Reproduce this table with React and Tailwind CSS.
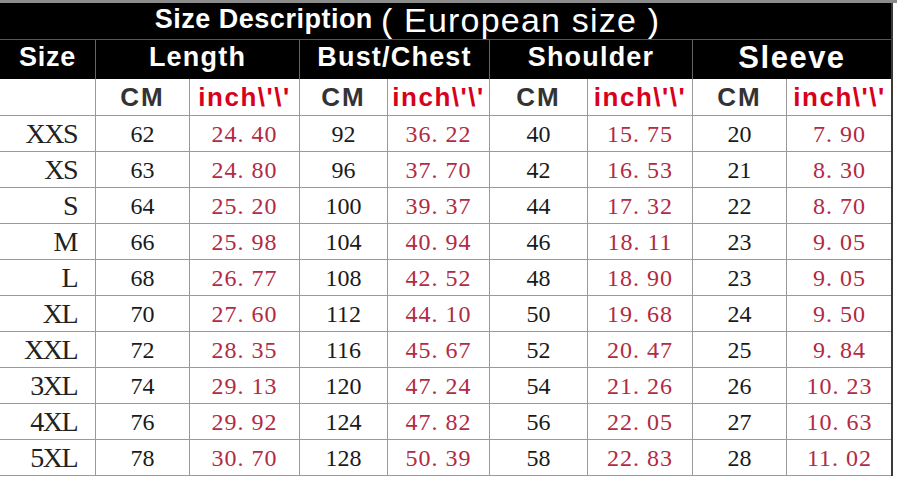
const cols = 'grid grid-cols-[96px_94px_110px_88px_102px_98px_105px_94px_105px]'

const rows = [
  ['XXS', '62', '24. 40', '92', '36. 22', '40', '15. 75', '20', '7. 90'],
  ['XS', '63', '24. 80', '96', '37. 70', '42', '16. 53', '21', '8. 30'],
  ['S', '64', '25. 20', '100', '39. 37', '44', '17. 32', '22', '8. 70'],
  ['M', '66', '25. 98', '104', '40. 94', '46', '18. 11', '23', '9. 05'],
  ['L', '68', '26. 77', '108', '42. 52', '48', '18. 90', '23', '9. 05'],
  ['XL', '70', '27. 60', '112', '44. 10', '50', '19. 68', '24', '9. 50'],
  ['XXL', '72', '28. 35', '116', '45. 67', '52', '20. 47', '25', '9. 84'],
  ['3XL', '74', '29. 13', '120', '47. 24', '54', '21. 26', '26', '10. 23'],
  ['4XL', '76', '29. 92', '124', '47. 82', '56', '22. 05', '27', '10. 63'],
  ['5XL', '78', '30. 70', '128', '50. 39', '58', '22. 83', '28', '11. 02'],
]

const serif = { fontFamily: '"Liberation Serif", "DejaVu Serif", serif' }

const head = 'flex items-center justify-center leading-none pb-[4px]'

export default function App() {
  return (
    <div
      className="w-[897px] h-[482px] bg-white overflow-hidden border-t-[3px] border-[#8c8c8c]"
      style={{ fontFamily: '"Liberation Sans", Arial, sans-serif' }}
    >
      <div className="w-[893px] border-r-2 border-[#3a3a3a]">
        {/* title band */}
        <div className="h-[36px] bg-black flex items-center justify-center pr-[76px] pb-[3px] leading-none text-white whitespace-pre">
          <span className="text-[27px] font-bold tracking-[0.5px]">Size Description</span>
          <span className="text-[34px] ml-[8px] font-normal tracking-[1.2px]">( European size )</span>
        </div>

        {/* header row */}
        <div className="h-[40px] bg-black border-t border-[#555] grid grid-cols-[96px_204px_190px_203px_198px] text-white font-bold">
          <div className={`${head} border-r border-[#666] text-[27px] tracking-[0.8px]`}>Size</div>
          <div className={`${head} border-r border-[#666] text-[27px] tracking-[1.2px]`}>Length</div>
          <div className={`${head} border-r border-[#666] text-[27px] tracking-[1.2px]`}>Bust/Chest</div>
          <div className={`${head} border-r border-[#666] text-[27px] tracking-[1.2px]`}>Shoulder</div>
          <div className={`${head} text-[31px] tracking-[1.5px]`}>Sleeve</div>
        </div>

        {/* sub header */}
        <div className={`${cols} h-[37px] border-b border-[#9a9a9a] font-bold text-[26px] leading-none`}>
          <div className="border-r border-[#9a9a9a]" />
          {[0, 1, 2, 3].map((i) => [
            <div key={'c' + i} className="flex items-center justify-center border-r border-[#9a9a9a] text-[#333] tracking-[2px]">
              CM
            </div>,
            <div
              key={'i' + i}
              className={`flex items-center justify-center text-[#d9001b] tracking-[1.5px] ${i < 3 ? 'border-r border-[#9a9a9a]' : ''}`}
            >
              inch\'\'
            </div>,
          ])}
        </div>

        {/* data */}
        {rows.map((r) => (
          <div key={r[0]} className={`${cols} h-[36px] border-b border-[#9a9a9a] leading-none`} style={serif}>
            {r.map((v, j) => (
              <div
                key={j}
                className={`flex items-center ${j < 8 ? 'border-r border-[#9a9a9a]' : ''} ${
                  j === 0
                    ? 'justify-end pr-[18px] text-[28px] text-[#222] tracking-[-1.5px]'
                    : j % 2 === 1
                    ? 'justify-center text-[24px] text-[#1a1a1a]'
                    : 'justify-center text-[24px] text-[#b22a44] tracking-[1px] whitespace-pre'
                }`}
              >
                {v}
              </div>
            ))}
          </div>
        ))}
      </div>
    </div>
  )
}
